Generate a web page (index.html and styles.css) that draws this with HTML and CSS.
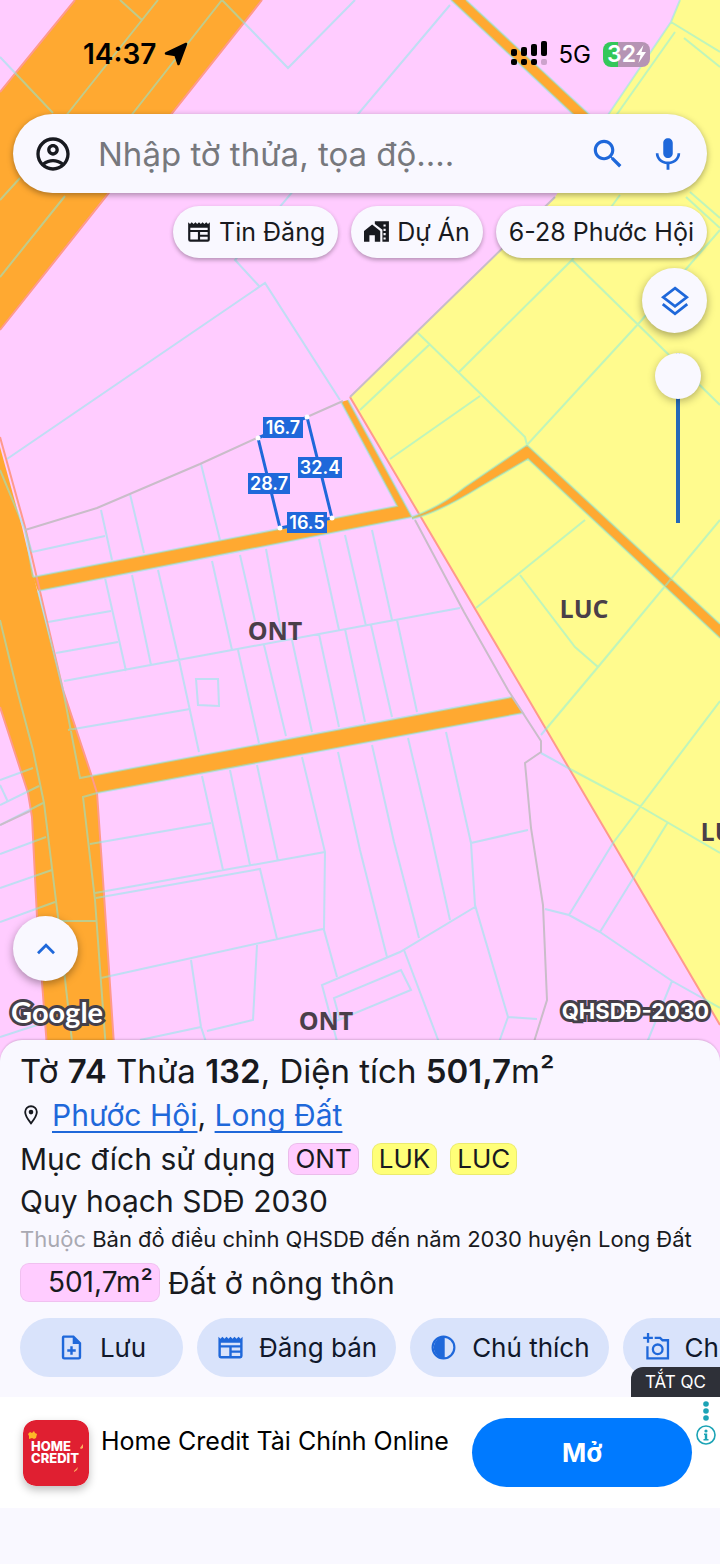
FILE: index.html
```html
<!DOCTYPE html>
<html lang="vi">
<head>
    <meta charset="UTF-8">
    <meta name="viewport" content="width=device-width, initial-scale=1.0">
    <title>Bản đồ quy hoạch</title>
    <link rel="stylesheet" href="styles.css">
</head>
<body>
    <!-- Iconos compartidos -->
    <svg class="sprite" aria-hidden="true">
        <symbol id="icon-news" viewBox="0 0 24 24">
            <path d="M2 3l1.700 1.700L5.300 3 7 4.700 8.700 3l1.650 1.700L12 3l1.700 1.700L15.300 3 17 4.700 18.700 3l1.600 1.700L22 3v16a2 2 0 0 1-2 2H4a2 2 0 0 1-2-2zM4 8v2.200h16V8zm0 4v7h7v-7zm9 0v2.500h7V12zm0 4.300V19h7v-2.700z" fill="currentColor" fill-rule="evenodd"/>
        </symbol>
    </svg>

    <main class="mapa">
        <svg class="mapa-fondo" viewBox="0 0 720 1060" preserveAspectRatio="xMidYMin slice" aria-label="Bản đồ QHSDĐ">
            <rect class="dat-o" width="720" height="1060"/>
            <path class="dat-lua" d="M680 0L671 22L608 115L555 197L350 397L523 690L720 1025V0z"/>
            <path class="ranh-do" d="M350 397L523 690L720 1025"/>

            <!-- Carreteras -->
            <g class="duong">
                <path d="M75 0H262L171 115L108 193L0 330V92z"/>
                <path d="M0 447L22 527L34 578L63 690L92 777L97 793L103 880L115 1060H48L37 917L32 817L28 793L0 707z"/>
                <path d="M451 0H466L592 117H576z"/>
                <path d="M33 577L397 506L341 402L348 400L412 517L38 591z"/>
                <path d="M412 517Q440 507 465 487L527 445L720 624V638L528 459L480 487Q440 512 412 519z"/>
                <path d="M80 778L512 697L523 713L97 793z"/>
            </g>
            <path class="ranh-do" d="M262 0L0 330M0 437L25 527L63 690L92 777L97 793L103 880L115 1060M0 707L28 793L32 817L37 917L48 1060M75 0L0 92"/>

            <!-- Límites de parcelas -->
            <path class="thua" d="M158 0L142 20L65 117M120 0L142 20M222 0L130 117M222 0L288 68L355 0M0 57L53 113M65 196L0 277M20 178L0 200
                M450 5L235 260L259 286M7 459L265 283L340 400
                M451 0L576 117M466 0L592 117
                M33 577L397 506L341 402M348 400L412 517L38 591
                M412 517Q440 507 465 487L527 445L720 624M720 638L528 459L480 487Q440 512 412 519
                M63 690L80 778L512 697L523 713L97 793L83 797L95 900L106 1050
                M0 470L25 530L33 577M38 591L63 690M0 620L17 690L33 750L44 803L58 917L73 1050
                M0 780L33 768M0 785L8 802M0 805L39 786M0 825L43 803M0 854L46 837M0 888L52 870M0 922L55 902M60 921H96M0 1037L37 1025
                M101 510L112 560M130 494L144 553M201 464L220 540M32 552L105 536M25 530L32 552
                M105 578L126 671M132 575L151 665M158 570L179 660L199 752M212 561L232 650M240 555L255 621M266 549L283 641M319 539L339 630M345 535L366 626M372 530L392 620
                M48 622L111 611M56 653L118 642M64 681L232 650L460 608
                M238 650L259 743M264 645L286 736M292 640L312 732M319 634L339 727M345 629L365 722M371 625L392 717M397 620L417 712
                M68 730L190 709M196 679L218 679L219 706L198 705z
                M202 776L223 870M230 770L250 865M257 765L278 861M302 757L325 852L324 930L337 977M338 752L360 850L387 957M372 745L394 842L419 938M408 738L430 830L450 920M446 732L471 843L475 905L508 1017L498 1045
                M471 843L528 830M90 844L211 823M95 893L325 852M96 898L260 869L277 939M101 978L323 929
                M191 960L201 1027L207 1045M257 945L253 1020L207 1031M140 1040L201 1027
                M338 1045L322 985L400 952L475 907M340 1020L334 998L401 970L411 990L336 1021M404 950L440 1045M508 1017L537 1019
                M545 909L569 915L600 932L672 981L720 1008M569 915L613 843L720 701M600 932L668 822M541 753L570 769L636 804L720 853M541 735L598 667L720 520M672 981L646 1045
                M476 608L585 520M520 575L575 647L598 667M390 459L480 396M360 410L430 344M418 333L525 437L527 445L640 322L720 230M459 372L572 260L720 405M572 260L620 195
                M680 0L671 22L608 115M671 22L720 52M684 38L720 67M675 32L615 117M690 192L720 218M686 197L720 228"/>
            <path class="ranh-xam" d="M25 530L97 508L200 464L257 438L307 417L343 401M350 397L555 197M415 520L464 612L508 690L541 741V752L525 763L531 828L543 905L547 1000L533 1045M0 825L30 811"/>

            <g class="ma-dat">
                <text x="275" y="640">ONT</text>
                <text x="584" y="618">LUC</text>
                <text x="725" y="841">LUC</text>
                <text x="326" y="1030">ONT</text>
            </g>

            <!-- Parcela seleccionada -->
            <path class="thua-chon" d="M258 438L307 417L332 518L280 528z"/>
            <g class="dinh">
                <circle cx="258" cy="438" r="2.500"/>
                <circle cx="307" cy="417" r="2.500"/>
                <circle cx="332" cy="518" r="2.500"/>
                <circle cx="280" cy="528" r="2.500"/>
            </g>
            <g class="canh">
                <rect x="263" y="417" width="40" height="21"/><text x="283" y="434">16.7</text>
                <rect x="298" y="457" width="44" height="21"/><text x="320" y="474">32.4</text>
                <rect x="248" y="473" width="42" height="21"/><text x="269" y="490">28.7</text>
                <rect x="287" y="512" width="40" height="21"/><text x="307" y="529">16.5</text>
            </g>
        </svg>

        <header class="estado">
            <span class="hora">14:37</span>
            <svg class="flecha" viewBox="0 0 24 24"><path d="M22 2L2 11.500L11.500 13L14.500 22z" stroke="#000" stroke-width="2.500" stroke-linejoin="round"/></svg>
            <svg class="senal" viewBox="0 0 36 26">
                <rect x="0" y="8" width="6" height="7" rx="2"/><rect x="10" y="6" width="6" height="9" rx="2"/><rect x="20" y="3" width="6" height="12" rx="2"/><rect x="30" y="0" width="6" height="15" rx="2"/>
                <rect x="0" y="18" width="6" height="6" rx="2"/><rect x="10" y="18" width="6" height="6" rx="2"/><rect x="20" y="18" width="6" height="6" rx="2"/><rect class="vacio" x="30" y="18" width="6" height="6" rx="2"/>
            </svg>
            <span class="red">5G</span>
            <span class="bateria">32<svg viewBox="0 0 10 18"><path d="M7.500 0L0 10h4.500L2.500 18 10 7H5.500z"/></svg></span>
        </header>

        <form class="buscador" role="search">
            <button type="button" aria-label="Tài khoản">
                <svg class="cuenta" viewBox="0 0 24 24"><path d="M12 2C6.480 2 2 6.480 2 12s4.480 10 10 10 10-4.480 10-10S17.520 2 12 2zM7.350 18.500C8.660 17.560 10.260 17 12 17s3.340.56 4.650 1.500c-1.310.94-2.910 1.500-4.650 1.500s-3.340-.56-4.650-1.500zm10.790-1.380C16.450 15.800 14.320 15 12 15s-4.450.8-6.140 2.120C4.700 15.730 4 13.950 4 12c0-4.420 3.580-8 8-8s8 3.580 8 8c0 1.950-.7 3.730-1.860 5.120zM12 6c-1.930 0-3.500 1.570-3.500 3.500S10.070 13 12 13s3.500-1.570 3.500-3.500S13.930 6 12 6zm0 5c-.83 0-1.500-.67-1.500-1.500S11.170 8 12 8s1.500.67 1.500 1.500S12.830 11 12 11z" fill="currentColor"/></svg>
            </button>
            <input type="text" placeholder="Nhập tờ thửa, tọa độ...." aria-label="Nhập tờ thửa, tọa độ">
            <button type="submit" aria-label="Tìm kiếm">
                <svg viewBox="0 0 24 24"><path d="M15.500 14h-.79l-.28-.27C15.410 12.590 16 11.110 16 9.500 16 5.910 13.090 3 9.500 3S3 5.910 3 9.500 5.910 16 9.500 16c1.610 0 3.090-.59 4.230-1.570l.27.28v.79l5 4.990L20.490 19l-4.990-5zm-6 0C7.010 14 5 11.990 5 9.500S7.010 5 9.500 5 14 7.010 14 9.500 11.990 14 9.500 14z" fill="currentColor"/></svg>
            </button>
            <button type="button" aria-label="Giọng nói">
                <svg viewBox="0 0 24 24"><path d="M12 14.500c1.800 0 3-1.340 3-3V5c0-1.660-1.200-3-3-3S9 3.340 9 5v6.500c0 1.660 1.200 3 3 3zM18 11.500c0 3-2.600 5.300-6 5.300s-6-2.300-6-5.300H4.300c0 3.700 2.900 6.500 6.800 6.900V22h1.800v-3.600c3.900-.4 6.800-3.200 6.800-6.900z" fill="currentColor"/></svg>
            </button>
        </form>

        <nav class="filtros">
            <button type="button"><svg viewBox="0 0 24 24"><use href="#icon-news"/></svg>Tin Đăng</button>
            <button type="button"><svg viewBox="0 0 24 24"><path d="M0 11l7.500-6 7.500 6v10h-5v-6H5v6H0zM10 2h13v19h-6V10l-7-5.500zM18 5v2h2V5zm0 4v2h2V9zm0 4v2h2v-2zm0 4v2h2v-2z" fill="currentColor" fill-rule="evenodd"/></svg>Dự Án</button>
            <button type="button">6-28 Phước Hội</button>
        </nav>

        <div class="controles">
            <button type="button" class="redondo" aria-label="Lớp bản đồ">
                <svg viewBox="0 0 30 30"><path d="M15 3L26 11.500L15 20L4 11.500zM3.500 18L15 27L26.500 18" fill="none" stroke="currentColor" stroke-width="2.600"/></svg>
            </button>
            <input type="range" class="opacidad" min="0" max="100" value="0" aria-label="Độ mờ">
        </div>

        <div class="pie-mapa">
            <button type="button" class="redondo" aria-label="Mở rộng">
                <svg viewBox="0 0 30 30"><path d="M7.500 19L15 11.500L22.500 19" fill="none" stroke="currentColor" stroke-width="2.600"/></svg>
            </button>
            <div class="creditos">
                <span class="google">Google</span>
                <span class="capa">QHSDĐ-2030</span>
            </div>
        </div>
    </main>

    <section class="ficha">
        <h1>Tờ <b>74</b> Thửa <b>132</b>, Diện tích <b>501,7</b>m²</h1>
        <p class="lugar">
            <svg viewBox="0 0 18 24"><path d="M9 1.500a7 7 0 0 0-7 7C2 13.500 9 22 9 22s7-8.500 7-13.500a7 7 0 0 0-7-7z" fill="none" stroke="currentColor" stroke-width="2.200"/><circle cx="9" cy="8.500" r="2.800" fill="currentColor"/></svg>
            <span><a href="#">Phước Hội</a>, <a href="#">Long Đất</a></span>
        </p>
        <p class="uso">Mục đích sử dụng <span class="tag rosa">ONT</span><span class="tag amarillo">LUK</span><span class="tag amarillo">LUC</span></p>
        <h2>Quy hoạch SDĐ 2030</h2>
        <p class="nota"><span>Thuộc</span> Bản đồ điều chỉnh QHSDĐ đến năm 2030 huyện Long Đất</p>
        <p class="superficie"><span class="area">501,7m²</span>Đất ở nông thôn</p>

        <div class="acciones">
            <button type="button"><svg viewBox="0 0 24 24"><path d="M5 2h9l6 6v12a2 2 0 0 1-2 2H6a2 2 0 0 1-2-2V4a2 2 0 0 1 1-2zM6 4v16h12V9h-5V4zm5 7h2v2.500h2.500v2H13V18h-2v-2.500H8.500v-2H11z" fill="currentColor" fill-rule="evenodd"/></svg>Lưu</button>
            <button type="button"><svg viewBox="0 0 24 24"><use href="#icon-news"/></svg>Đăng bán</button>
            <button type="button"><svg viewBox="0 0 24 24"><circle cx="12" cy="12" r="9" fill="none" stroke="currentColor" stroke-width="1.800"/><path d="M13 3a9 9 0 0 0 0 18z" fill="currentColor"/></svg>Chú thích</button>
            <button type="button"><svg viewBox="0 0 24 24"><path d="M5 0v8M1 4h8M4.500 11v10h17V6H17l-2-2h-4.500" fill="none" stroke="currentColor" stroke-width="1.900"/><circle cx="13" cy="13.500" r="4" fill="none" stroke="currentColor" stroke-width="1.900"/></svg>Chụp ảnh</button>
        </div>
    </section>

    <aside class="anuncio">
        <a href="#" class="quitar">TẮT QC</a>
        <svg class="logo" viewBox="0 0 66 66" role="img" aria-label="Home Credit">
            <rect width="66" height="66" rx="13" fill="#e01f31"/>
            <path d="M5 14l2-2 2 1 2-2 1 2 2 1-1 4-2 1-2-1-3 1v-3z" fill="#fdb827"/>
            <path d="M57 28l3-4v4l-2 1zM51 51l4-4-1 3-3 2z" fill="#fdb060"/>
            <text class="logo-texto"><tspan x="8" y="31">HOME</tspan><tspan x="8" y="43">CREDIT</tspan></text>
        </svg>
        <p>Home Credit Tài Chính Online</p>
        <button type="button" class="abrir">Mở</button>
        <svg class="info" viewBox="0 0 20 46">
            <circle cx="10" cy="4" r="2.800"/><circle cx="10" cy="11" r="2.800"/><circle cx="10" cy="18" r="2.800"/>
            <circle cx="10" cy="35" r="9" fill="none" stroke="#1ba3b5" stroke-width="1.600"/>
            <circle cx="10" cy="31" r="1.600"/><path d="M8 33.500h3.200V39H12.500v1.500h-5V39H8.800v-4H8z"/>
        </svg>
    </aside>
</body>
</html>
```
FILE: styles.css
```css
:root {
    --surface: #f9f8ff;
    --text: #181a20;
    --blue: #1f68da;
    --pink: #ffccff;
    --yellow: #fffb8e;
    --orange: #ffa931;
}
* {
    box-sizing: border-box;
}
body {
    display: flex;
    flex-direction: column;
    min-height: 100vh;
    margin: 0;
    padding-bottom: 56px;
    overflow-x: hidden;
    background-color: var(--surface);
    color: var(--text);
    font-family: Inter, 'Noto Sans', sans-serif;
}
button {
    border: none;
    padding: 0;
    background: none;
    color: inherit;
    font-family: inherit;
    cursor: pointer;
}
h1, h2, p {
    margin: 0;
    font-weight: 400;
}
.sprite {
    position: absolute;
    width: 0;
    height: 0;
}

/* Mapa */
.mapa {
    position: relative;
    display: flex;
    flex-direction: column;
    flex: 1;
    min-height: 640px;
    padding: 28px 13px 29px;
}
.mapa-fondo {
    position: absolute;
    inset: 0;
    width: 100%;
    height: 100%;
}
.mapa > :not(.mapa-fondo) {
    position: relative;
}
.dat-o {
    fill: var(--pink);
}
.dat-lua {
    fill: var(--yellow);
}
.duong {
    fill: var(--orange);
}
.thua, .ranh-xam, .ranh-do {
    fill: none;
}
.thua {
    stroke: #7fefe8;
    stroke-width: 2;
    opacity: 0.5;
}
.ranh-xam {
    stroke: #c9bdc9;
    stroke-width: 2;
}
.ranh-do {
    stroke: #ff9a8c;
    stroke-width: 2;
}
.ma-dat {
    fill: #4a3f49;
    font-family: 'Open Sans', sans-serif;
    font-size: 25px;
    font-weight: 700;
    text-anchor: middle;
}
.thua-chon {
    fill: none;
    stroke: var(--blue);
    stroke-width: 3;
}
.dinh {
    fill: #fff;
}
.canh rect {
    fill: var(--blue);
}
.canh text {
    fill: #fff;
    font-size: 18px;
    font-weight: 600;
    text-anchor: middle;
}

/* Barra de estado */
.estado {
    display: flex;
    align-items: center;
    height: 52px;
    margin-bottom: 34px;
    padding: 0 57px 0 70px;
    color: #000;
}
.hora {
    font-size: 28px;
    font-weight: 600;
}
.flecha {
    width: 24px;
    height: 24px;
    margin-left: 8px;
}
.senal {
    width: 36px;
    height: 26px;
    margin-left: auto;
}
.vacio {
    opacity: 0.2;
}
.red {
    margin: 0 12px;
    font-size: 24px;
}
.bateria {
    display: flex;
    align-items: center;
    justify-content: center;
    width: 47px;
    height: 25px;
    border-radius: 8px;
    background: linear-gradient(90deg, #34c759 32%, #b594b4 32%);
    color: #fff;
    font-size: 23px;
    font-weight: 600;
}
.bateria svg {
    width: 10px;
    height: 18px;
    fill: #fff;
}

/* Buscador */
.buscador {
    display: flex;
    align-items: center;
    height: 79px;
    padding: 0 20px;
    border-radius: 40px;
    background-color: var(--surface);
    box-shadow: 0 2px 6px rgba(0, 0, 0, 0.35);
    color: var(--blue);
}
.buscador button {
    display: flex;
    margin-left: 22px;
}
.buscador button:first-child {
    margin-left: 0;
    color: var(--text);
}
.buscador svg {
    width: 38px;
    height: 38px;
}
.buscador svg.cuenta {
    width: 40px;
    height: 40px;
}
.buscador input {
    flex: 1;
    min-width: 0;
    margin-left: 25px;
    padding: 0;
    border: none;
    outline: none;
    background: none;
    color: var(--text);
    font-family: inherit;
    font-size: 33px;
}
.buscador input::placeholder {
    color: #77787d;
}
.filtros {
    display: flex;
    justify-content: flex-end;
    gap: 13px;
    margin-top: 13px;
}
.filtros button {
    display: flex;
    align-items: center;
    gap: 7px;
    height: 52px;
    padding: 0 13px;
    border-radius: 26px;
    background-color: var(--surface);
    box-shadow: 0 2px 4px rgba(0, 0, 0, 0.3);
    font-size: 25px;
    white-space: nowrap;
}
.filtros svg {
    width: 26px;
    height: 26px;
}

/* Controles del mapa */
.controles {
    display: flex;
    flex-direction: column;
    align-items: flex-end;
    gap: 20px;
    margin-top: 10px;
}
.redondo {
    display: flex;
    align-items: center;
    justify-content: center;
    width: 65px;
    height: 65px;
    border-radius: 50%;
    background-color: var(--surface);
    box-shadow: 0 3px 8px rgba(0, 0, 0, 0.35);
    color: var(--blue);
}
.redondo svg {
    width: 32px;
    height: 32px;
}
.opacidad {
    appearance: none;
    width: 46px;
    height: 170px;
    margin: 0 6px 0 0;
    background: linear-gradient(#2469b8, #2469b8) center / 4px 100% no-repeat;
    writing-mode: vertical-lr;
}
.opacidad::-webkit-slider-runnable-track {
    width: 46px;
}
.opacidad::-webkit-slider-thumb {
    appearance: none;
    width: 46px;
    height: 46px;
    border-radius: 50%;
    background-color: var(--surface);
    box-shadow: 1px 2px 8px rgba(0, 0, 0, 0.3);
}
.pie-mapa {
    margin-top: auto;
}
.creditos {
    display: flex;
    align-items: center;
    justify-content: space-between;
    height: 40px;
    margin: 10px -2px 0;
    color: #fff;
    paint-order: stroke;
    -webkit-text-stroke: 6px #45404a;
}
.google {
    font-family: Lato, sans-serif;
    font-size: 29px;
    font-weight: 700;
}
.capa {
    font-size: 22px;
    font-weight: 700;
}

/* Ficha de la parcela */
.ficha {
    position: relative;
    margin-top: -20px;
    padding: 9px 20px 20px;
    border-radius: 22px 22px 0 0;
    background-color: var(--surface);
    box-shadow: 0 -1px 2px rgba(0, 0, 0, 0.15);
    font-size: 30px;
}
.ficha h1 {
    font-size: 33px;
    line-height: 44px;
}
.ficha b {
    font-weight: 600;
}
.lugar {
    display: flex;
    align-items: center;
    gap: 10px;
    line-height: 44px;
}
.lugar svg {
    width: 22px;
    height: 20px;
}
.lugar a {
    color: var(--blue);
    text-decoration: underline;
    text-decoration-thickness: 2px;
    text-underline-offset: 5px;
    text-decoration-skip-ink: none;
}
.uso {
    display: flex;
    align-items: center;
    gap: 13px;
    line-height: 44px;
}
.tag {
    height: 32px;
    padding: 0 6px;
    border: 1px solid rgba(0, 0, 0, 0.08);
    border-radius: 9px;
    font-size: 26px;
    line-height: 30px;
}
.rosa, .area {
    background-color: var(--pink);
}
.amarillo {
    background-color: #ffff78;
}
.ficha h2 {
    font-size: 30px;
    line-height: 40px;
}
.nota {
    font-size: 22px;
    line-height: 36px;
    white-space: nowrap;
}
.nota span {
    color: #a9a9b2;
}
.superficie {
    display: flex;
    align-items: center;
    gap: 8px;
    margin-top: 6px;
}
.area {
    width: 140px;
    padding-right: 6px;
    border: 1px solid rgba(0, 0, 0, 0.06);
    border-radius: 9px;
    font-size: 28px;
    line-height: 37px;
    text-align: right;
}
.acciones {
    display: flex;
    gap: 14px;
    margin: 16px -20px 0 0;
    overflow: hidden;
}
.acciones button {
    display: flex;
    flex-shrink: 0;
    align-items: center;
    justify-content: center;
    gap: 14px;
    min-width: 163px;
    height: 59px;
    padding: 0 19px;
    border-radius: 30px;
    background-color: #d9e3fb;
    color: #10182b;
    font-size: 26px;
}
.acciones svg {
    width: 29px;
    height: 29px;
    color: var(--blue);
}

/* Anuncio */
.anuncio {
    position: relative;
    display: flex;
    align-items: center;
    height: 111px;
    padding: 0 4px 0 23px;
    background-color: #fff;
    color: #000;
}
.quitar {
    position: absolute;
    right: 0;
    bottom: 100%;
    padding: 0 14px;
    border-radius: 12px 0 0 0;
    background-color: #2e3038;
    color: #fff;
    font-size: 17px;
    line-height: 30px;
    text-decoration: none;
}
.logo {
    flex-shrink: 0;
    width: 66px;
    height: 66px;
    border-radius: 13px;
    box-shadow: 0 4px 8px rgba(0, 0, 0, 0.25);
}
.logo-texto {
    fill: #fff;
    font-size: 13px;
    font-weight: 800;
}
.anuncio p {
    flex: 1;
    align-self: flex-start;
    margin: 28px 0 0 12px;
    font-size: 25px;
    line-height: 32px;
}
.abrir {
    width: 220px;
    height: 69px;
    border-radius: 35px;
    background-color: #007aff;
    color: #fff;
    font-size: 26px;
    font-weight: 700;
}
.info {
    align-self: flex-start;
    width: 20px;
    height: 46px;
    margin: 3px 0 0 4px;
    fill: #1ba3b5;
}
```
